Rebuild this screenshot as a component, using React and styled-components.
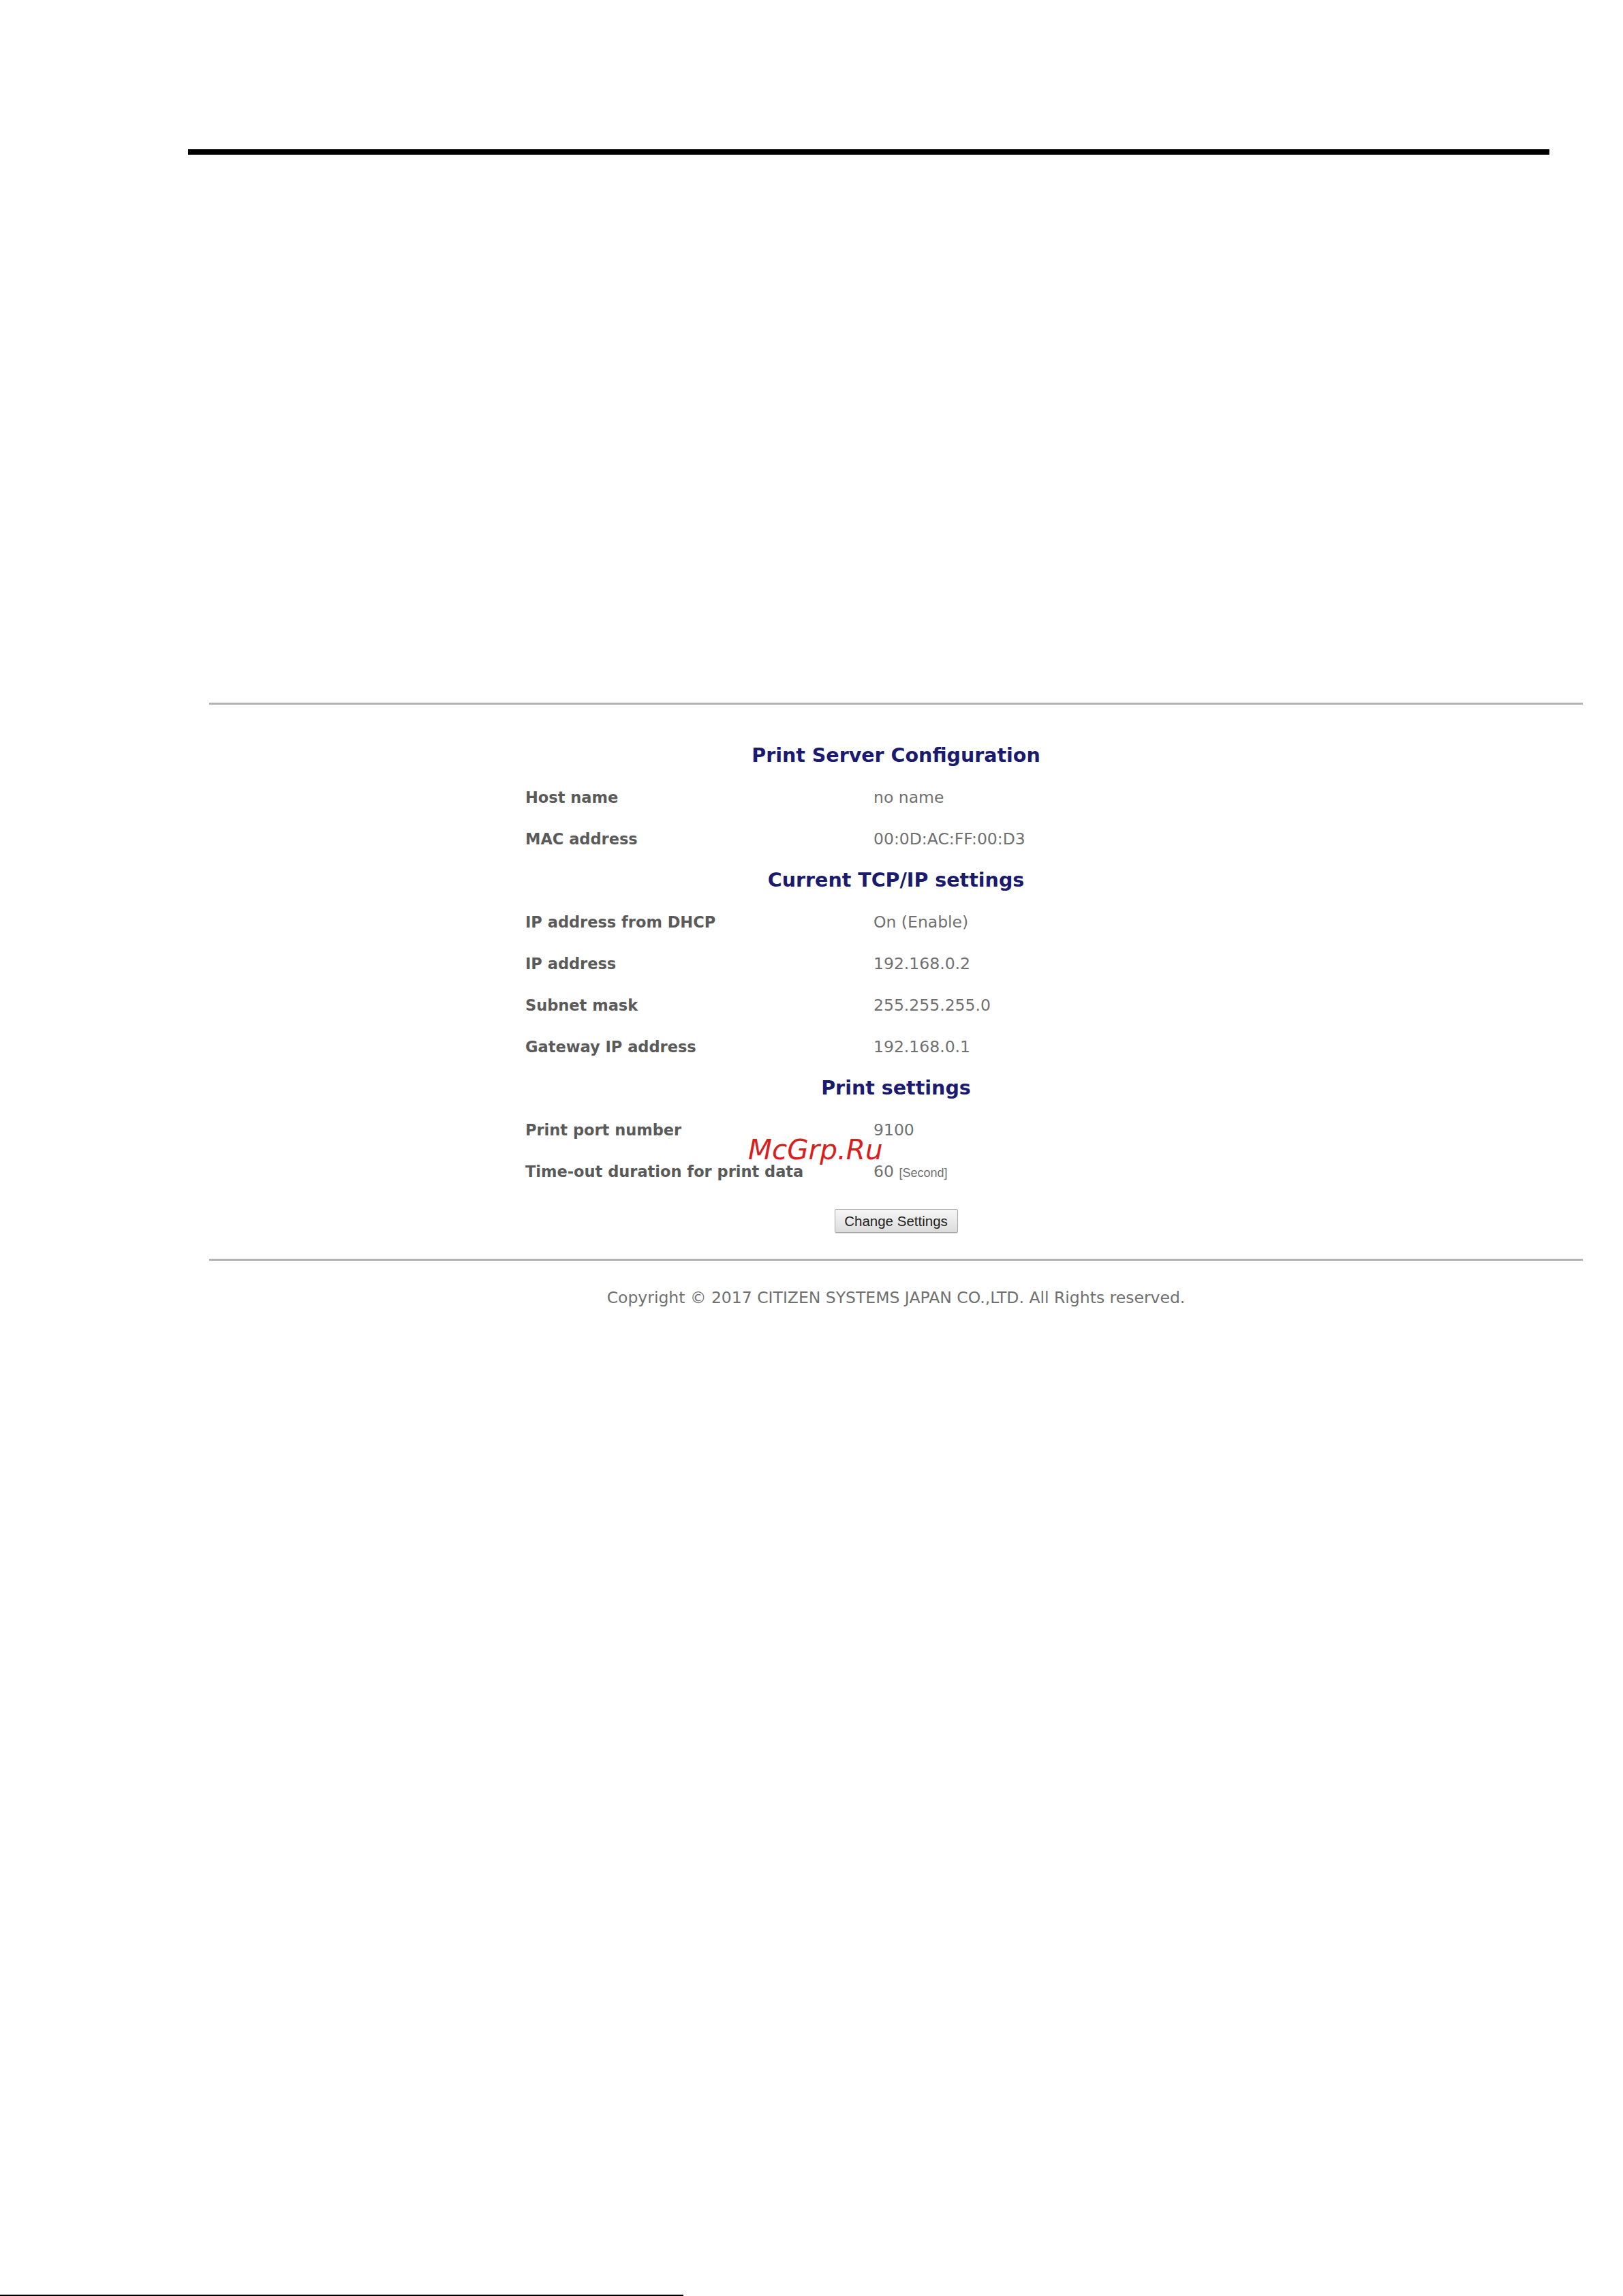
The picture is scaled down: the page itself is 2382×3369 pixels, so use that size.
import styled, { createGlobalStyle } from "styled-components";

const GlobalStyle = createGlobalStyle`
  html, body {
    margin: 0;
    padding: 0;
    background: #ffffff;
  }
  body {
    font-family: "DejaVu Sans", Verdana, sans-serif;
  }
`;

// Page
const Page = styled.div`
  position: relative;
  width: 2382px;
  height: 3369px;
  overflow: hidden;
  display: flex;
  flex-direction: column;
`;

const TopRule = styled.div`
  margin: 219px 0 0 276px;
  width: 1998px;
  height: 8px;
  background: #000;
`;

const Frame = styled.div`
  margin: 804px 0 0 307px;
  width: 2016px;
  display: flex;
  flex-direction: column;
`;

const GrayRule = styled.div`
  height: 3px;
  background: #b4b4b4;
`;

const Content = styled.div`
  width: 1088px;
  margin: 0 auto;
  display: flex;
  flex-direction: column;
  padding: 60px 0 38px;
`;

const Heading = styled.h2`
  margin: 0;
  height: 61px;
  line-height: 30px;
  text-align: center;
  font-size: 28.5px;
  font-weight: bold;
  color: #1a1a6e;
`;

const Row = styled.div`
  display: grid;
  grid-template-columns: 511px 1fr;
  height: 61px;
  line-height: 30px;
`;

const Label = styled.div`
  font-size: 22.5px;
  font-weight: bold;
  color: #5a5a5a;
`;

const Value = styled.div`
  font-size: 23.5px;
  color: #707070;
`;

const Unit = styled.span`
  font-family: "Liberation Sans", Arial, sans-serif;
  font-size: 18px;
`;

const ButtonRow = styled.div`
  display: flex;
  justify-content: center;
  padding-top: 9px;
`;

const Button = styled.button`
  width: 181px;
  height: 35px;
  padding: 0;
  font-family: "Liberation Sans", Arial, sans-serif;
  font-size: 20.5px;
  color: #222;
  background: linear-gradient(#f6f6f6, #dcdcdc);
  border: 1px solid #a8a8a8;
  border-radius: 2px;
  box-shadow: 0 1px 1px rgba(0, 0, 0, 0.15);
`;

const Copyright = styled.p`
  margin: 40px 0 0;
  line-height: 28px;
  text-align: center;
  font-size: 23.5px;
  color: #707070;
`;

const Watermark = styled.div`
  position: absolute;
  left: 1098px;
  top: 1663px;
  font-size: 40.5px;
  font-style: italic;
  color: #d81e1e;
`;

const BottomRule = styled.div`
  position: absolute;
  left: 0;
  bottom: 0;
  width: 1003px;
  height: 2px;
  background: #000;
`;

const sections = [
  {
    title: "Print Server Configuration",
    rows: [
      ["Host name", "no name"],
      ["MAC address", "00:0D:AC:FF:00:D3"],
    ],
  },
  {
    title: "Current TCP/IP settings",
    rows: [
      ["IP address from DHCP", "On (Enable)"],
      ["IP address", "192.168.0.2"],
      ["Subnet mask", "255.255.255.0"],
      ["Gateway IP address", "192.168.0.1"],
    ],
  },
  {
    title: "Print settings",
    rows: [
      ["Print port number", "9100"],
      [
        "Time-out duration for print data",
        <>
          60 <Unit>[Second]</Unit>
        </>,
      ],
    ],
  },
];

export default function App() {
  return (
    <Page>
      <GlobalStyle />
      <TopRule />

      <Frame>
        <GrayRule />
        <Content>
          {sections.map((s) => (
            <div key={s.title}>
              <Heading>{s.title}</Heading>
              {s.rows.map(([label, value]) => (
                <Row key={label}>
                  <Label>{label}</Label>
                  <Value>{value}</Value>
                </Row>
              ))}
            </div>
          ))}
          <ButtonRow>
            <Button>Change Settings</Button>
          </ButtonRow>
        </Content>
        <GrayRule />
        <Copyright>Copyright © 2017 CITIZEN SYSTEMS JAPAN CO.,LTD. All Rights reserved.</Copyright>
      </Frame>

      <Watermark>McGrp.Ru</Watermark>
      <BottomRule />
    </Page>
  );
}
